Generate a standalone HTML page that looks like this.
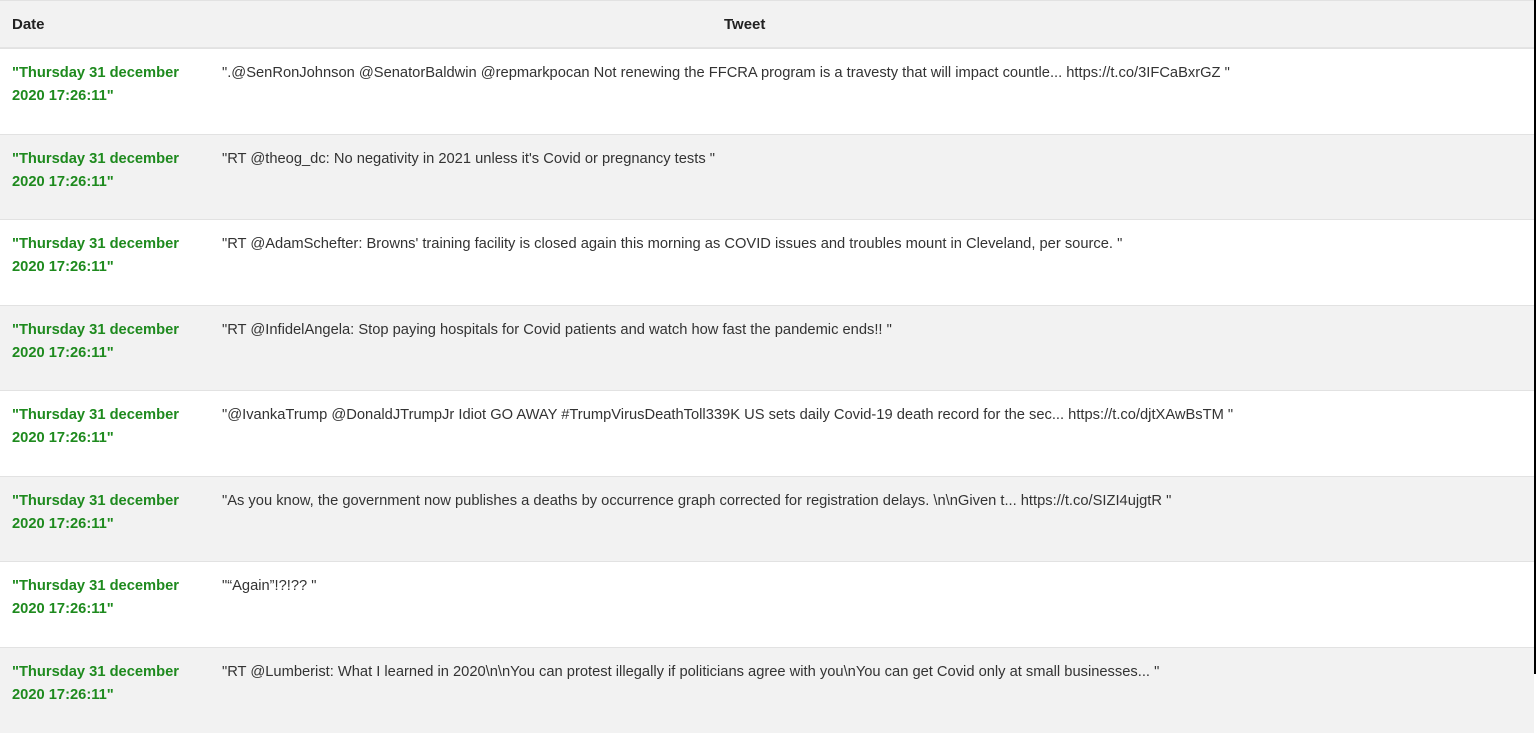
<!DOCTYPE html>
<html><head><meta charset="utf-8"><style>
html,body{margin:0;padding:0;width:1536px;height:674px;overflow:hidden;background:#fff;font-family:"Liberation Sans",sans-serif;}
.hdr{position:absolute;left:0;top:0;width:1534px;height:46px;background:#f2f2f2;border-top:1px solid #e2e2e2;border-bottom:2px solid #e4e4e4;font-weight:bold;font-size:15px;color:#222;}
.hdr span{position:absolute;top:15px;}
.row{position:absolute;left:0;width:1534px;height:85px;border-top:1px solid #e2e2e2;font-size:14.7px;}
.row.g{background:#f2f2f2;}
.d{position:absolute;left:12px;top:13px;width:190px;color:#1e8a1e;font-weight:bold;line-height:23px;}
.t{position:absolute;left:222px;top:13px;color:#333;line-height:23px;white-space:nowrap;}
.bar{position:absolute;right:0;top:0;width:2px;height:674px;background:#000;}
</style></head><body>
<div class="hdr"><span style="left:12px">Date</span><span style="left:724px">Tweet</span></div>
<div class="row" style="top:48px"><div class="d">"Thursday 31 december 2020 17:26:11"</div><div class="t">".@SenRonJohnson @SenatorBaldwin @repmarkpocan Not renewing the FFCRA program is a travesty that will impact countle... https://t.co/3IFCaBxrGZ "</div></div>
<div class="row g" style="top:134px"><div class="d">"Thursday 31 december 2020 17:26:11"</div><div class="t">"RT @theog_dc: No negativity in 2021 unless it's Covid or pregnancy tests "</div></div>
<div class="row" style="top:219px"><div class="d">"Thursday 31 december 2020 17:26:11"</div><div class="t">"RT @AdamSchefter: Browns' training facility is closed again this morning as COVID issues and troubles mount in Cleveland, per source. "</div></div>
<div class="row g" style="top:305px"><div class="d">"Thursday 31 december 2020 17:26:11"</div><div class="t">"RT @InfidelAngela: Stop paying hospitals for Covid patients and watch how fast the pandemic ends!! "</div></div>
<div class="row" style="top:390px"><div class="d">"Thursday 31 december 2020 17:26:11"</div><div class="t">"@IvankaTrump @DonaldJTrumpJr Idiot GO AWAY #TrumpVirusDeathToll339K US sets daily Covid-19 death record for the sec... https://t.co/djtXAwBsTM "</div></div>
<div class="row g" style="top:476px"><div class="d">"Thursday 31 december 2020 17:26:11"</div><div class="t">"As you know, the government now publishes a deaths by occurrence graph corrected for registration delays. \n\nGiven t... https://t.co/SIZI4ujgtR "</div></div>
<div class="row" style="top:561px"><div class="d">"Thursday 31 december 2020 17:26:11"</div><div class="t">"“Again”!?!?? "</div></div>
<div class="row g" style="top:647px"><div class="d">"Thursday 31 december 2020 17:26:11"</div><div class="t">"RT @Lumberist: What I learned in 2020\n\nYou can protest illegally if politicians agree with you\nYou can get Covid only at small businesses... "</div></div>
<div class="bar"></div>
</body></html>
